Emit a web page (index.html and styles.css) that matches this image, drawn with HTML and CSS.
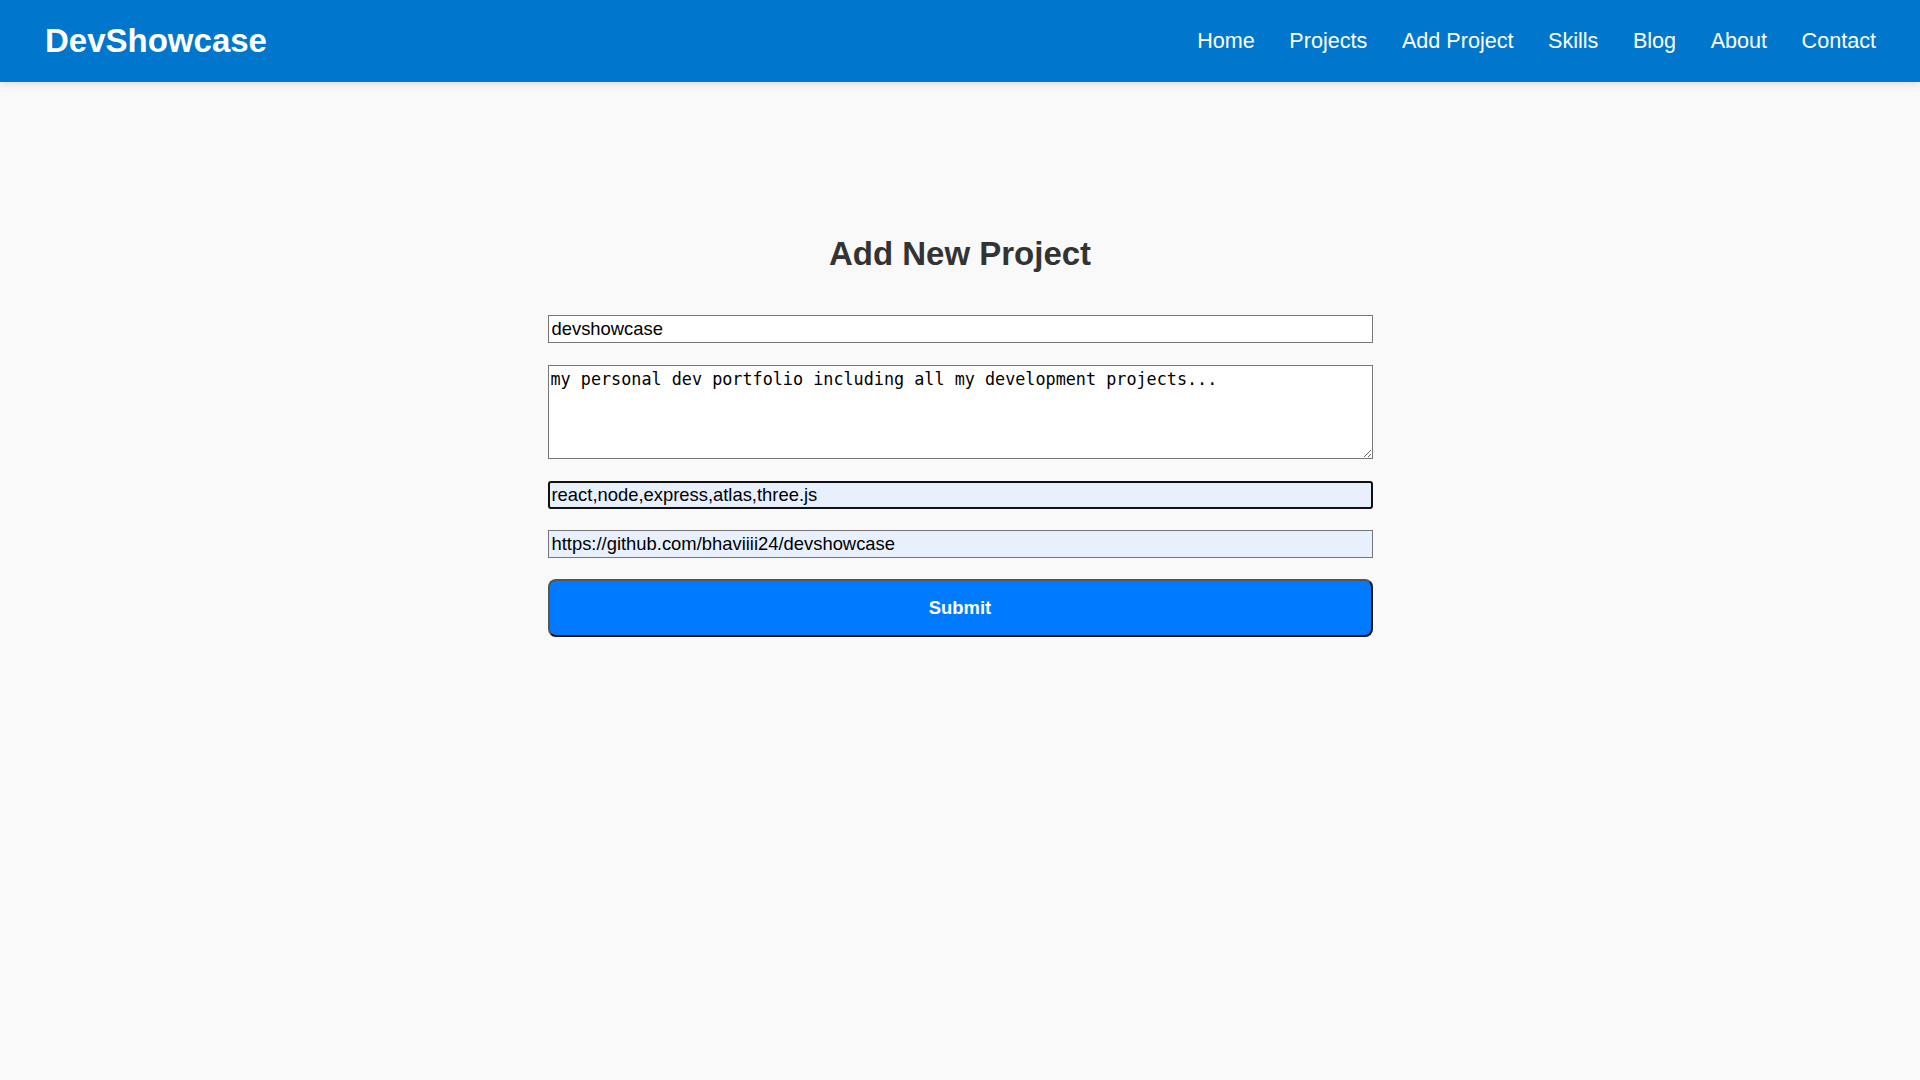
FILE: index.html
```html
<!DOCTYPE html>
<html lang="en">
<head>
<meta charset="utf-8">
<title>DevShowcase - Add Project</title>
<link rel="stylesheet" href="styles.css">
</head>
<body>
<header class="site-header">
  <div class="logo">DevShowcase</div>
  <nav class="nav">
    <a href="#">Home</a>
    <a href="#">Projects</a>
    <a href="#">Add Project</a>
    <a href="#">Skills</a>
    <a href="#">Blog</a>
    <a href="#">About</a>
    <a href="#">Contact</a>
  </nav>
</header>
<main class="page">
  <h2 class="title">Add New Project</h2>
  <form class="project-form">
    <input class="field" type="text" value="devshowcase">
    <textarea class="field area">my personal dev portfolio including all my development projects...</textarea>
    <input class="field autofill focused" type="text" value="react,node,express,atlas,three.js">
    <input class="field autofill" type="text" value="https://github.com/bhaviiii24/devshowcase">
    <button class="submit" type="button">Submit</button>
  </form>
</main>
</body>
</html>
```

FILE: styles.css
```css
* { box-sizing: border-box; }
html, body {
  margin: 0;
  padding: 0;
}
body {
  background: #f9f9f9;
  font-family: "Liberation Sans", Arial, sans-serif;
  color: #333;
  min-height: 1080px;
}
.site-header {
  height: 82px;
  background: #0077cc;
  display: flex;
  align-items: center;
  justify-content: space-between;
  padding: 0 44px 0 45px;
  box-shadow: 0 2px 8px rgba(0, 0, 0, 0.12);
  position: relative;
}
.logo {
  color: #fff;
  font-weight: bold;
  font-size: 33px;
  line-height: 1;
  padding-bottom: 1px;
}
.nav {
  display: flex;
  gap: 34.5px;
}
.nav a {
  color: #fff;
  text-decoration: none;
  font-size: 21.6px;
  line-height: 1;
}
.page {
  padding-top: 153px;
  display: flex;
  flex-direction: column;
  align-items: center;
}
.title {
  margin: 0 0 42px;
  font-size: 33px;
  line-height: 38px;
  font-weight: bold;
  color: #333;
}
.project-form {
  width: 825px;
  display: flex;
  flex-direction: column;
  gap: 21px;
}
.field {
  display: block;
  width: 100%;
  height: 28px;
  margin: 0;
  border: 1px solid #767676;
  border-radius: 0;
  background: #fff;
  color: #000;
  font-family: "Liberation Sans", Arial, sans-serif;
  font-size: 18.4px;
  padding: 2px 3px;
}
.area {
  height: 94px;
  margin: 1px 0 1px;
  font-family: "DejaVu Sans Mono", monospace;
  font-size: 16.8px;
  line-height: 1.2;
  padding: 3px 2px 2px;
  resize: vertical;
}
.autofill {
  background: #e8f0fe;
}
.focused {
  border: 2px solid #111;
  border-radius: 3px;
  padding: 1px 2px;
  outline: none;
}
.submit {
  height: 58px;
  width: 100%;
  background: #007bff;
  color: #fff;
  font-family: "Liberation Sans", Arial, sans-serif;
  font-weight: bold;
  font-size: 18.4px;
  border-width: 2px;
  border-style: solid;
  border-color: #555 #111 #111 #555;
  border-radius: 8px;
  cursor: pointer;
}
```
